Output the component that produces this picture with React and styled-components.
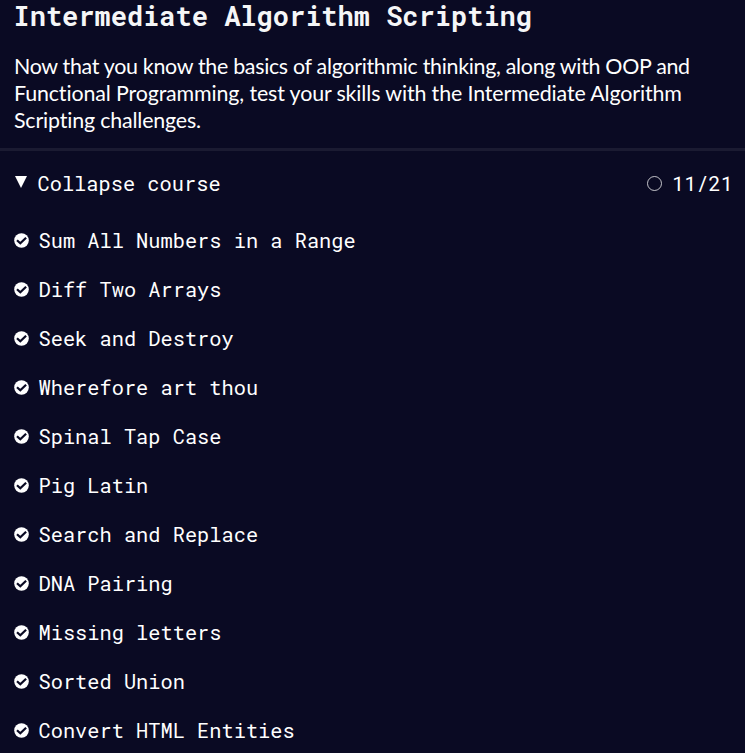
import React from "react";
import styled, { createGlobalStyle } from "styled-components";

const GlobalStyle = createGlobalStyle`
  * { box-sizing: border-box; }
  body { margin: 0; background: #0a0a23; overflow: hidden; }
`;

const mono = `"Roboto Mono", "DejaVu Sans Mono", "Liberation Mono", monospace`;

const Page = styled.main`
  width: 745px;
  height: 753px;
  background: #0a0a23;
  color: #fff;
`;

const Header = styled.header`
  height: 151px;
  padding: 0 14px;
  border-bottom: 3px solid #1b1b32;
`;

const Title = styled.h2`
  margin: 0 0 0 -0.5px;
  height: 53px;
  color: #f5f6f7;
  font: 700 27px/32px ${mono};
  white-space: nowrap;
`;

const Description = styled.p`
  margin: 0;
  font: 400 21.4px/27px Lato, sans-serif;
  font-variant-ligatures: none;
`;

const Line = styled.span`
  display: block;
  white-space: nowrap;
  letter-spacing: ${(p) => p.$tracking}px;
`;

const CourseBar = styled.div`
  display: flex;
  align-items: center;
  height: 65px;
  padding: 0 12px 0 14px;
  font: 400 20.35px/30px ${mono};
`;

const Triangle = styled.svg`
  width: 14px;
  height: 14px;
  margin: -3px 9.5px 0 0;
`;

const Progress = styled.span`
  display: flex;
  align-items: center;
  gap: 10px;
  margin-left: auto;
`;

const List = styled.ul`
  margin: 0;
  padding: 0 14px;
  list-style: none;
`;

const Challenge = styled.li`
  display: flex;
  align-items: center;
  gap: 9.5px;
  height: 49px;
  font: 400 20.33px/30px ${mono};
  white-space: nowrap;
`;

const challenges = [
  "Sum All Numbers in a Range",
  "Diff Two Arrays",
  "Seek and Destroy",
  "Wherefore art thou",
  "Spinal Tap Case",
  "Pig Latin",
  "Search and Replace",
  "DNA Pairing",
  "Missing letters",
  "Sorted Union",
  "Convert HTML Entities",
];

const CheckIcon = () => (
  <svg width="15" height="15" viewBox="0 0 15 15">
    <circle cx="7.5" cy="7.5" r="7.3" fill="#fff" />
    <path d="M3 7.3 6.3 10.3 12.1 4.7" fill="none" stroke="#0a0a23" strokeWidth="2.2" />
  </svg>
);

export default function App() {
  return (
    <Page>
      <GlobalStyle />
      <Header>
        <Title>Intermediate Algorithm Scripting</Title>
        <Description>
          <Line $tracking={-0.3}>Now that you know the basics of algorithmic thinking, along with OOP and</Line>
          <Line $tracking={-0.13}>Functional Programming, test your skills with the Intermediate Algorithm</Line>
          <Line $tracking={-0.17}>Scripting challenges.</Line>
        </Description>
      </Header>
      <CourseBar>
        <Triangle viewBox="0 0 14 14"><path d="M1 1h12L7 13z" fill="#fff" /></Triangle>
        <span>Collapse course</span>
        <Progress>
          <svg width="15" height="15" viewBox="0 0 15 15"><circle cx="7.5" cy="7.5" r="7" fill="none" stroke="#fff" strokeWidth="0.75" /></svg>
          <span>11/21</span>
        </Progress>
      </CourseBar>
      <List>
        {challenges.map((name) => (
          <Challenge key={name}><CheckIcon /><span>{name}</span></Challenge>
        ))}
      </List>
    </Page>
  );
}
